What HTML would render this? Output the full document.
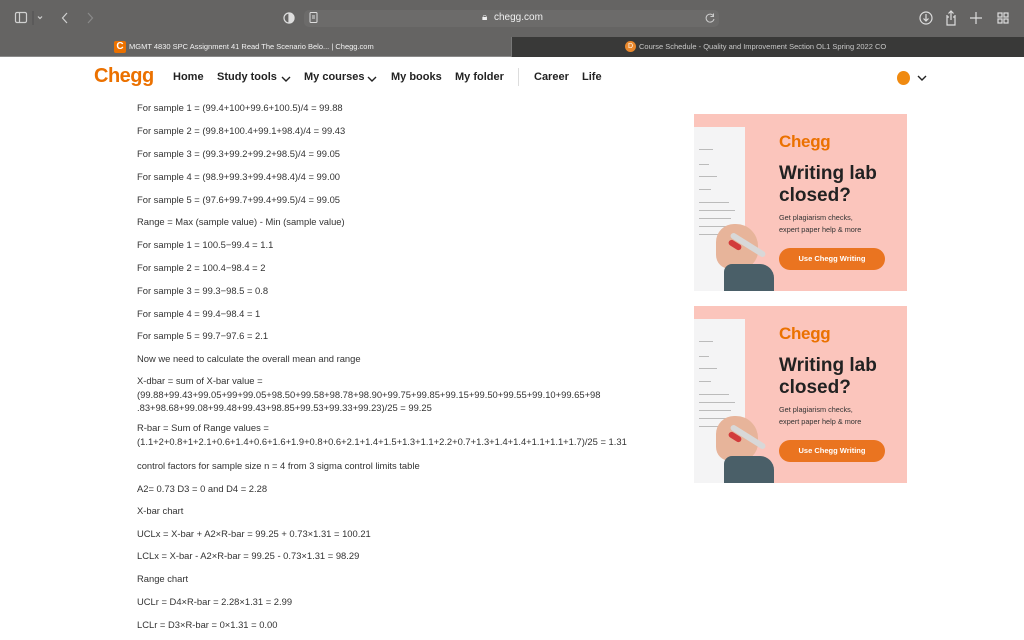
<!DOCTYPE html>
<html><head><meta charset="utf-8"><style>
*{margin:0;padding:0;box-sizing:border-box}
body{width:1024px;height:640px;overflow:hidden;background:#fff;font-family:"Liberation Sans",sans-serif;position:relative}
.a{position:absolute;white-space:nowrap}
.top{position:absolute;left:0;top:0;width:1024px;height:37px;background:#656463}
.tabs{position:absolute;left:0;top:37px;width:1024px;height:20px;background:#656463;border-bottom:1px solid #8a8a8a}
.tab2{position:absolute;left:511px;top:37px;width:513px;height:20px;background:#393938;border-left:1px solid #777}
.t{position:absolute;left:137px;font-size:9.4px;color:#333;line-height:13.5px;white-space:nowrap}
.nav{position:absolute;top:71px;font-size:11px;font-weight:bold;color:#222}
.ad{position:absolute;left:694px;width:213px;height:177px;background:#fbc5bc;overflow:hidden}
.ad .paper{position:absolute;left:0;top:13px;width:51px;height:164px;background:#f4f4f5}
.ad .ln{position:absolute;left:5px;height:1px;background:#bbb}
.ad .logo{position:absolute;left:85px;top:18px;font-size:17px;font-weight:bold;color:#eb7100;letter-spacing:-0.3px}
.ad .h{position:absolute;left:85px;top:49px;font-size:19px;font-weight:bold;color:#222;line-height:22px}
.ad .s{position:absolute;left:85px;top:98px;font-size:7.3px;color:#333;line-height:12px}
.ad .btn{position:absolute;left:85px;top:134px;width:106px;height:22px;border-radius:11px;background:#ea7420;color:#fff;font-size:7.5px;font-weight:bold;text-align:center;line-height:22px}
.ad .hand{position:absolute;left:22px;top:110px;width:42px;height:45px;background:#e7b49a;border-radius:18px 22px 18px 14px}
.ad .sleeve{position:absolute;left:30px;top:150px;width:50px;height:30px;background:#4a5f68;border-radius:8px 14px 0 0}
.ad .pen{position:absolute;left:34px;top:128px;width:40px;height:6px;background:#d8d8d8;transform:rotate(32deg);border-radius:3px}
.ad .pen2{position:absolute;left:34px;top:128px;width:14px;height:6px;background:#d23b3b;transform:rotate(32deg);border-radius:3px}
</style></head><body>
<div class="top"></div>
<div class="tabs"></div>
<div class="tab2"></div>
<svg class="a" style="left:14px;top:10px" width="70" height="16" viewBox="0 0 70 16" fill="none" stroke="#d0d0d0" stroke-width="1.2">
<rect x="1.5" y="2.5" width="11" height="10" rx="1.5"/><line x1="5.5" y1="2.5" x2="5.5" y2="12.5"/>
<line x1="19" y1="1" x2="19" y2="15" stroke="#555"/>
<path d="M24 6.5l2 2 2-2"/>
<path d="M53 3l-4.5 5 4.5 5"/>
</svg>
<svg class="a" style="left:86px;top:10px" width="12" height="16"><path d="M2 3l4.5 5-4.5 5" stroke="#8a8a8a" stroke-width="1.2" fill="none"/></svg>
<svg class="a" style="left:283px;top:10px" width="40" height="16" fill="none" stroke="#ddd" stroke-width="1.2">
<circle cx="6" cy="8" r="5"/><path d="M6 3a5 5 0 0 1 0 10z" fill="#ddd"/>
</svg>
<div class="a" style="left:304px;top:10px;width:415px;height:17px;border-radius:5px;background:#6c6b6a"></div>
<svg class="a" style="left:309px;top:10px" width="10" height="16" fill="none" stroke="#ddd" stroke-width="1"><rect x="1" y="2.5" width="7" height="10" rx="1"/><line x1="3" y1="6" x2="6" y2="6"/><line x1="3" y1="8" x2="6" y2="8"/></svg>
<div class="a" style="left:482px;top:12px;font-size:10px;color:#f0f0f0">&#x1F512;&#xFE0E;</div>
<div class="a" style="left:494px;top:12px;font-size:10px;color:#f0f0f0">chegg.com</div>
<svg class="a" style="left:704px;top:12px" width="12" height="12" fill="none" stroke="#ccc" stroke-width="1"><path d="M9.5 4A4 4 0 1 0 10 7"/><path d="M9.5 1.5v3h-3"/></svg>
<svg class="a" style="left:918px;top:9px" width="100" height="18" fill="none" stroke="#ddd" stroke-width="1.2">
<circle cx="8" cy="9" r="6"/><path d="M8 5v7M5.5 9.5L8 12l2.5-2.5"/>
<path d="M29 6v10h8V6M31 8h-2M37 8h-2"/><path d="M33 2v9M30.5 4.5L33 2l2.5 2.5"/>
<path d="M58 3v12M52 9h12"/>
<rect x="80" y="4" width="4" height="4"/><rect x="86" y="4" width="4" height="4"/><rect x="80" y="10" width="4" height="4"/><rect x="86" y="10" width="4" height="4"/>
</svg>
<div class="a" style="left:114px;top:41px;width:12px;height:12px;background:#eb7100;border-radius:2px;color:#fff;font-size:10px;font-weight:bold;text-align:center;line-height:12px">C</div>
<div class="a" style="left:129px;top:42px;font-size:7.5px;color:#f2f2f2">MGMT 4830 SPC Assignment 41 Read The Scenario Belo... | Chegg.com</div>
<div class="a" style="left:625px;top:41px;width:11px;height:11px;background:#e9882c;border-radius:50%;color:#fff;font-size:7px;text-align:center;line-height:11px">D</div>
<div class="a" style="left:639px;top:42px;font-size:7.5px;color:#c8c8c8">Course Schedule - Quality and Improvement Section OL1 Spring 2022 CO</div>
<div class="a" style="left:94px;top:65px;font-size:20px;font-weight:bold;color:#eb7100;letter-spacing:-0.5px">Chegg</div>
<div class="nav" style="left:173px">Home</div>
<div class="nav" style="left:217px">Study tools</div>
<svg class="a" style="left:281px;top:75px" width="10" height="8"><path d="M1 2l4 4 4-4" stroke="#222" stroke-width="1.4" fill="none"/></svg>
<div class="nav" style="left:304px">My courses</div>
<svg class="a" style="left:367px;top:75px" width="10" height="8"><path d="M1 2l4 4 4-4" stroke="#222" stroke-width="1.4" fill="none"/></svg>
<div class="nav" style="left:391px">My books</div>
<div class="nav" style="left:455px">My folder</div>
<div class="a" style="left:518px;top:68px;width:1px;height:18px;background:#ddd"></div>
<div class="nav" style="left:534px">Career</div>
<div class="nav" style="left:582px">Life</div>
<div class="a" style="left:897px;top:71px;width:13px;height:14px;border-radius:50%;background:#f08a10"></div>
<svg class="a" style="left:917px;top:74px" width="10" height="8"><path d="M1 2l4 4 4-4" stroke="#222" stroke-width="1.4" fill="none"/></svg>
<div class="t" style="top:101px">For sample 1 = (99.4+100+99.6+100.5)/4 = 99.88</div>
<div class="t" style="top:124px">For sample 2 = (99.8+100.4+99.1+98.4)/4 = 99.43</div>
<div class="t" style="top:147px">For sample 3 = (99.3+99.2+99.2+98.5)/4 = 99.05</div>
<div class="t" style="top:170px">For sample 4 = (98.9+99.3+99.4+98.4)/4 = 99.00</div>
<div class="t" style="top:193px">For sample 5 = (97.6+99.7+99.4+99.5)/4 = 99.05</div>
<div class="t" style="top:215px">Range = Max (sample value) - Min (sample value)</div>
<div class="t" style="top:238px">For sample 1 = 100.5−99.4 = 1.1</div>
<div class="t" style="top:261px">For sample 2 = 100.4−98.4 = 2</div>
<div class="t" style="top:284px">For sample 3 = 99.3−98.5 = 0.8</div>
<div class="t" style="top:307px">For sample 4 = 99.4−98.4 = 1</div>
<div class="t" style="top:329px">For sample 5 = 99.7−97.6 = 2.1</div>
<div class="t" style="top:352px">Now we need to calculate the overall mean and range</div>
<div class="t" style="top:374px">X-dbar = sum of X-bar value =<br>(99.88+99.43+99.05+99+99.05+98.50+99.58+98.78+98.90+99.75+99.85+99.15+99.50+99.55+99.10+99.65+98<br>.83+98.68+99.08+99.48+99.43+98.85+99.53+99.33+99.23)/25 = 99.25</div>
<div class="t" style="top:421px">R-bar = Sum of Range values =<br>(1.1+2+0.8+1+2.1+0.6+1.4+0.6+1.6+1.9+0.8+0.6+2.1+1.4+1.5+1.3+1.1+2.2+0.7+1.3+1.4+1.4+1.1+1.1+1.7)/25 = 1.31</div>
<div class="t" style="top:459px">control factors for sample size n = 4 from 3 sigma control limits table</div>
<div class="t" style="top:482px">A2= 0.73 D3 = 0 and D4 = 2.28</div>
<div class="t" style="top:504px">X-bar chart</div>
<div class="t" style="top:527px">UCLx = X-bar + A2×R-bar = 99.25 + 0.73×1.31 = 100.21</div>
<div class="t" style="top:549px">LCLx = X-bar - A2×R-bar = 99.25 - 0.73×1.31 = 98.29</div>
<div class="t" style="top:572px">Range chart</div>
<div class="t" style="top:595px">UCLr = D4×R-bar = 2.28×1.31 = 2.99</div>
<div class="t" style="top:618px">LCLr = D3×R-bar = 0×1.31 = 0.00</div>
<div class="ad" style="top:114px">
<div class="paper"></div>
<div class="ln" style="top:35px;width:14px"></div><div class="ln" style="top:50px;width:10px"></div><div class="ln" style="top:62px;width:18px"></div><div class="ln" style="top:75px;width:12px"></div><div class="ln" style="top:88px;width:30px"></div><div class="ln" style="top:96px;width:36px"></div><div class="ln" style="top:104px;width:32px"></div><div class="ln" style="top:112px;width:36px"></div><div class="ln" style="top:120px;width:30px"></div>
<div class="hand"></div><div class="pen"></div><div class="pen2"></div><div class="sleeve"></div>
<div class="logo">Chegg</div>
<div class="h">Writing lab<br>closed?</div>
<div class="s">Get plagiarism checks,<br>expert paper help &amp; more</div>
<div class="btn">Use Chegg Writing</div>
</div>
<div class="ad" style="top:306px">
<div class="paper"></div>
<div class="ln" style="top:35px;width:14px"></div><div class="ln" style="top:50px;width:10px"></div><div class="ln" style="top:62px;width:18px"></div><div class="ln" style="top:75px;width:12px"></div><div class="ln" style="top:88px;width:30px"></div><div class="ln" style="top:96px;width:36px"></div><div class="ln" style="top:104px;width:32px"></div><div class="ln" style="top:112px;width:36px"></div><div class="ln" style="top:120px;width:30px"></div>
<div class="hand"></div><div class="pen"></div><div class="pen2"></div><div class="sleeve"></div>
<div class="logo">Chegg</div>
<div class="h">Writing lab<br>closed?</div>
<div class="s">Get plagiarism checks,<br>expert paper help &amp; more</div>
<div class="btn">Use Chegg Writing</div>
</div>
</body></html>
